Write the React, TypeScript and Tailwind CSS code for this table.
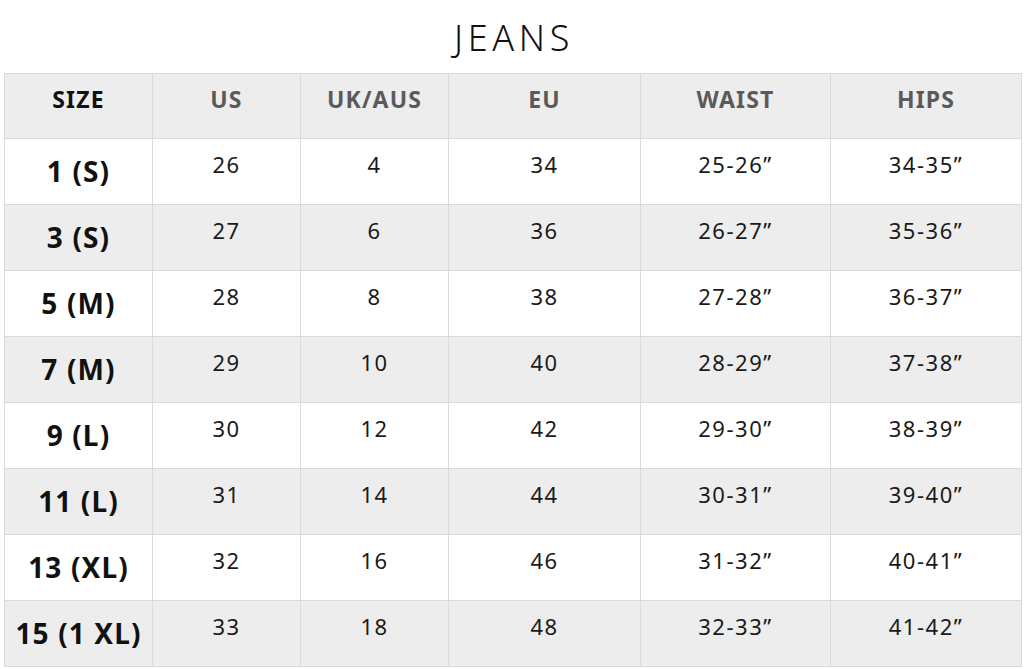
const headers = ["SIZE", "US", "UK/AUS", "EU", "WAIST", "HIPS"];

const rows = [
  ["1 (S)", "26", "4", "34", "25-26”", "34-35”"],
  ["3 (S)", "27", "6", "36", "26-27”", "35-36”"],
  ["5 (M)", "28", "8", "38", "27-28”", "36-37”"],
  ["7 (M)", "29", "10", "40", "28-29”", "37-38”"],
  ["9 (L)", "30", "12", "42", "29-30”", "38-39”"],
  ["11 (L)", "31", "14", "44", "30-31”", "39-40”"],
  ["13 (XL)", "32", "16", "46", "31-32”", "40-41”"],
  ["15 (1 XL)", "33", "18", "48", "32-33”", "41-42”"],
];

const cols = "grid grid-cols-[148px_148px_148px_192px_190px_191px]";

export default function App() {
  return (
    <div className="h-[669px] w-[1024px] bg-white font-['Noto_Sans',sans-serif]">
      <h1 className="flex h-[73px] items-center justify-center pl-[4px] pt-[3px] text-[36px] font-light tracking-[0.13em] text-[#111]">
        JEANS
      </h1>
      <div className="ml-[4px] w-[1018px] border-l border-t border-[#dadada]">
        <div className={`${cols} h-[65px] bg-[#ededed]`}>
          {headers.map((h, i) => (
            <div
              key={h}
              className={`flex items-center justify-center border-b border-r border-[#dadada] pb-[14px] text-[23px] font-bold tracking-[0.05em] ${
                i === 0 ? "text-[#111]" : "text-[#5a5a5a]"
              }`}
            >
              {h}
            </div>
          ))}
        </div>
        {rows.map((r, ri) => (
          <div
            key={r[0]}
            className={`${cols} h-[66px] ${ri % 2 === 1 ? "bg-[#ededed]" : "bg-white"}`}
          >
            {r.map((c, ci) => (
              <div
                key={ci}
                className={`flex items-center justify-center border-b border-r border-[#dadada] ${
                  ci === 0
                    ? "pb-[2px] text-[28px] font-bold tracking-[0.04em] text-[#111]"
                    : "pb-[14px] text-[22px] font-normal tracking-[0.07em] text-[#1a1a1a]"
                }`}
              >
                {c}
              </div>
            ))}
          </div>
        ))}
      </div>
    </div>
  );
}
